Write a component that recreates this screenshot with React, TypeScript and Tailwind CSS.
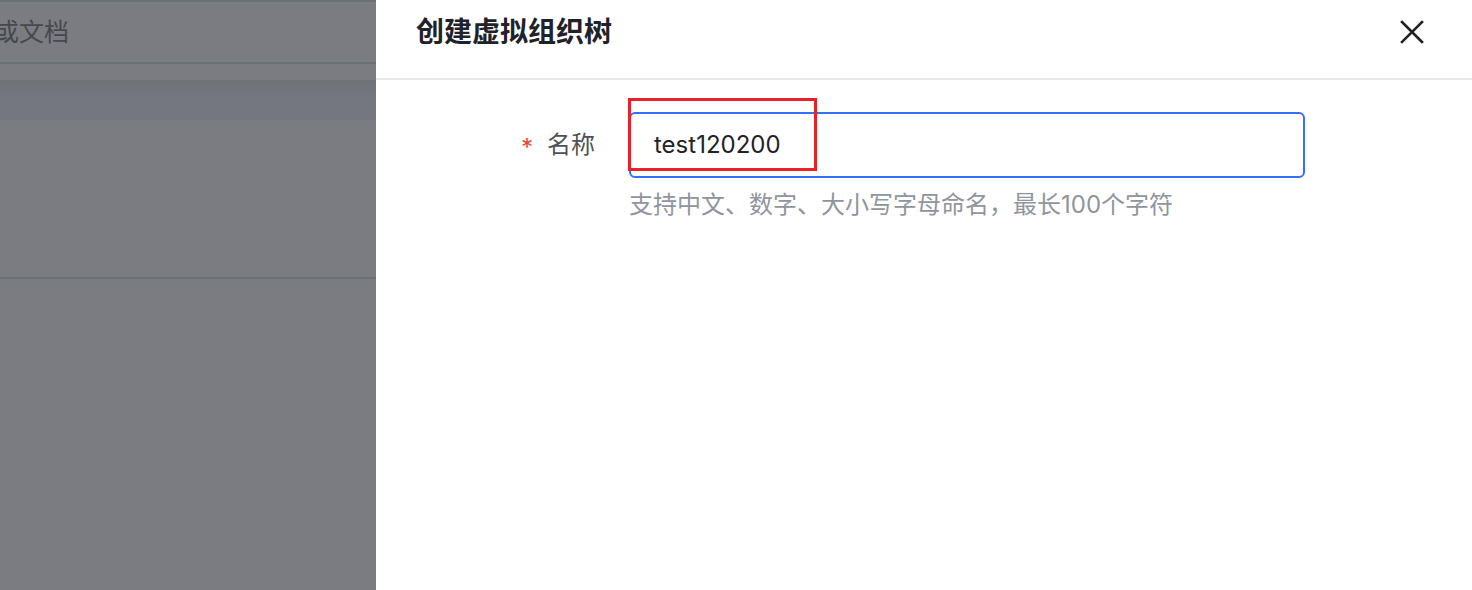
import React from 'react';

const font = { fontFamily: 'Inter, "Noto Sans CJK SC", sans-serif' };

const CloseIcon = () => (
    <svg width="24" height="24" viewBox="0 0 24 24" fill="none">
        <path d="M2 2L22 22M22 2L2 22" stroke="#1f2329" strokeWidth="2.6" strokeLinecap="square" />
    </svg>
);

const App: React.FC = () => {
    return (
        <div className="flex w-[1472px] h-[590px] overflow-hidden" style={font}>
            {/* Left: page behind the mask */}
            <div className="w-[376px] shrink-0 h-full bg-[#7b7c81] flex flex-col">
                <div className="h-[2px] bg-[#6c7176]" />
                <div className="h-[60px] flex items-center overflow-hidden">
                    <span className="-ml-[6px] text-[25px] text-[#46484d] whitespace-nowrap leading-none">或文档</span>
                </div>
                <div className="h-[2px] bg-[#6c7176]" />
                <div className="h-[16px]" />
                <div className="h-[40px] bg-gradient-to-b from-[#707277] to-[#747780] to-40%" />
                <div className="h-[157px]" />
                <div className="h-[2px] bg-[#6c7176]" />
            </div>

            {/* Right: drawer */}
            <div className="flex-1 h-full bg-white flex flex-col">
                <div className="h-[80px] border-b-2 border-[#e5e7eb] flex items-center justify-between pl-[40px] pr-[48px]">
                    <h2 className="text-[28px] font-semibold text-[#1f2329] leading-none -mt-[14px]">创建虚拟组织树</h2>
                    <button className="-mt-[14px] text-[#1f2329]">
                        <CloseIcon />
                    </button>
                </div>

                <div className="flex pt-[32px]">
                    <div className="w-[253px] shrink-0 flex items-center justify-end pr-[34px] h-[66px]">
                        <span className="text-[#e8453c] text-[24px] mr-[14px] mt-[6px] leading-none">*</span>
                        <span className="text-[24px] text-[#4e5259] leading-none">名称</span>
                    </div>
                    <div className="flex flex-col">
                        <div className="relative">
                            <div className="w-[676px] h-[66px] border-2 border-[#3370ff] rounded-[6px] flex items-center pl-[23px]">
                                <span className="text-[24px] text-[#1f2329] leading-none">test120200</span>
                            </div>
                            {/* annotation box */}
                            <div className="absolute left-[-1px] top-[-14px] w-[189px] h-[73px] border-[3px] border-[#e8202a]" />
                        </div>
                        <div className="mt-[15px] text-[24px] text-[#8f959e] leading-none whitespace-nowrap">
                            支持中文、数字、大小写字母命名，最长100个字符
                        </div>
                    </div>
                </div>
            </div>
        </div>
    );
};

export default App;
